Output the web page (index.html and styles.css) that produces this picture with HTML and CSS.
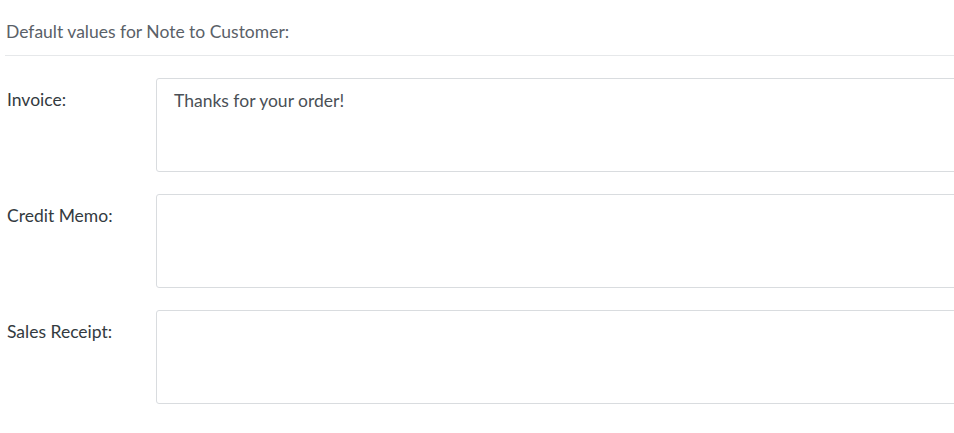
FILE: index.html
```html
<!DOCTYPE html>
<html lang="en">
<head>
    <meta charset="UTF-8">
    <title>Note to Customer</title>
    <link rel="stylesheet" href="styles.css">
</head>
<body>
    <div class="panel">
        <div class="panel-title">Default values for Note to Customer:</div>

        <div class="field">
            <label class="field-label" for="invoice">Invoice:</label>
            <textarea id="invoice" class="field-input">Thanks for your order!</textarea>
        </div>

        <div class="field">
            <label class="field-label" for="credit-memo">Credit Memo:</label>
            <textarea id="credit-memo" class="field-input"></textarea>
        </div>

        <div class="field">
            <label class="field-label" for="sales-receipt">Sales Receipt:</label>
            <textarea id="sales-receipt" class="field-input"></textarea>
        </div>
    </div>
</body>
</html>
```

FILE: styles.css
```css
body {
    margin: 0;
    background: #fff;
    font-family: Lato, "Open Sans", sans-serif;
    font-size: 17.5px;
    color: #333;
}

.panel {
    padding-left: 5px;
    overflow: hidden;
}

.panel-title {
    color: #5a6168;
    padding: 21px 0 12px 1px;
    line-height: 22px;
    border-bottom: 1px solid #e6e8ea;
}

.field {
    display: flex;
    margin-top: 22px;
    margin-right: -10px;
}

.field-label {
    width: 151px;
    flex: none;
    padding: 11px 0 0 2px;
    box-sizing: border-box;
    line-height: 22px;
    color: #333a40;
}

.field-input {
    flex: 1;
    height: 94px;
    box-sizing: border-box;
    border: 1px solid #d9dcdf;
    border-radius: 3px;
    padding: 11px 17px;
    font-family: inherit;
    font-size: 17.5px;
    line-height: 22px;
    color: #4a5056;
    resize: none;
    margin: 0;
}
```
